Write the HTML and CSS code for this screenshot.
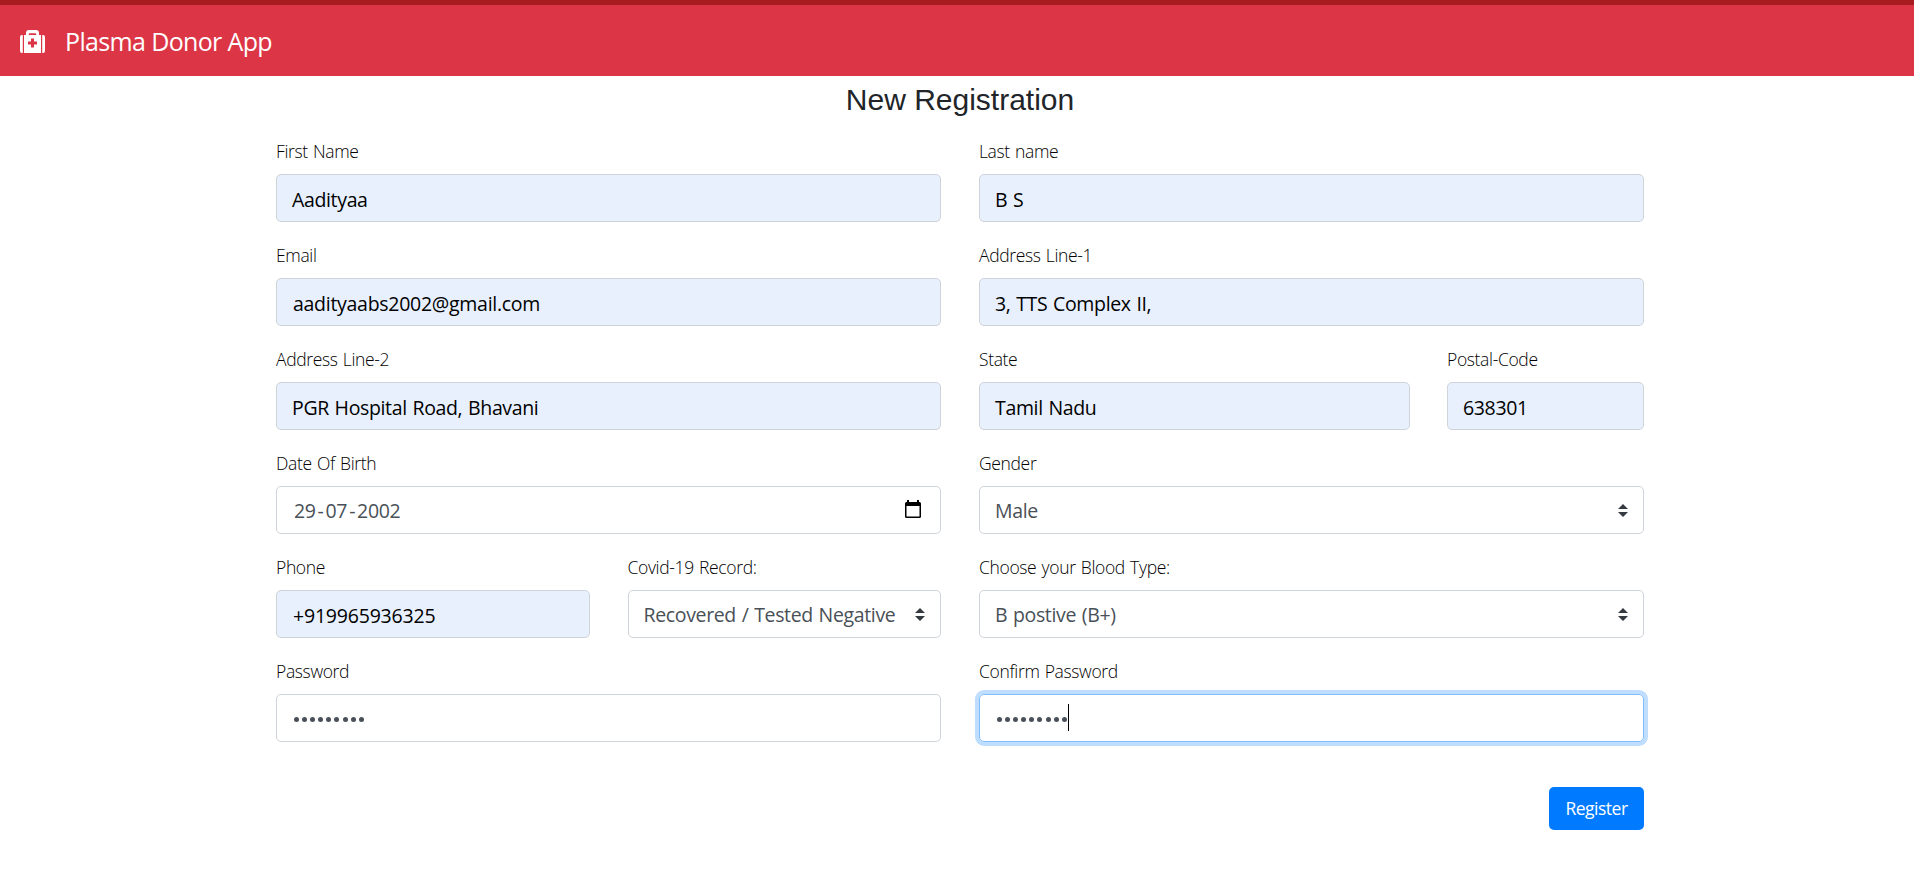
FILE: index.html
```html
<!DOCTYPE html>
<html lang="en">
<head>
<meta charset="utf-8">
<title>Plasma Donor App</title>
<link rel="stylesheet" href="styles.css">
</head>
<body>
<header class="navbar">
  <svg class="brand-icon" viewBox="0 0 25 23"><path fill="#fff" d="M2 5H2.800V23H2Q0 23 0 21V7Q0 5 2 5ZM4 5H6V3Q6 0 9 0H16Q19 0 19 3V5H21V23H4ZM8.800 5H16.200V3.800Q16.200 3.200 15.500 3.200H9.500Q8.800 3.200 8.800 3.800ZM22.200 5H23Q25 5 25 7V21Q25 23 23 23H22.200Z"/><path fill="#dc3545" d="M11 8.500H14V11.500H17V14.500H14V17.500H11V14.500H8V11.500H11Z"/></svg>
  <span class="brand">Plasma Donor App</span>
</header>
<main class="container">
  <h1 class="title">New Registration</h1>
  <div class="grid">
    <div class="field"><label>First Name</label><div class="control filled"><span>Aadityaa</span></div></div>
    <div class="field"><label>Last name</label><div class="control filled"><span>B S</span></div></div>
    <div class="field"><label>Email</label><div class="control filled email"><span>aadityaabs2002@gmail.com</span></div></div>
    <div class="field"><label>Address Line-1</label><div class="control filled"><span>3, TTS Complex II,</span></div></div>
    <div class="field"><label>Address Line-2</label><div class="control filled"><span>PGR Hospital Road, Bhavani</span></div></div>
    <div class="split state-split">
      <div class="field"><label>State</label><div class="control filled"><span>Tamil Nadu</span></div></div>
      <div class="field"><label>Postal-Code</label><div class="control filled"><span>638301</span></div></div>
    </div>
    <div class="field"><label>Date Of Birth</label><div class="control date"><span class="date-text"><span>29</span><span>-</span><span>07</span><span>-</span><span>2002</span></span>
      <svg class="calendar" viewBox="0 0 16 18"><path fill="#000" fill-rule="evenodd" d="M2 0H4V2H12V0H14V2H14.500Q16 2 16 3.500V16.500Q16 18 14.500 18H1.500Q0 18 0 16.500V3.500Q0 2 1.500 2H2ZM1.500 6V16.500H14.500V6Z"/></svg></div></div>
    <div class="field"><label>Gender</label><div class="control select"><span>Male</span><svg class="arrows" viewBox="0 0 10 13"><path d="M0 5L5 0L10 5ZM0 8H10L5 13Z"/></svg></div></div>
    <div class="split">
      <div class="field"><label>Phone</label><div class="control filled phone"><span>+919965936325</span></div></div>
      <div class="field"><label>Covid-19 Record:</label><div class="control select"><span>Recovered / Tested Negative</span><svg class="arrows" viewBox="0 0 10 13"><path d="M0 5L5 0L10 5ZM0 8H10L5 13Z"/></svg></div></div>
    </div>
    <div class="field"><label>Choose your Blood Type:</label><div class="control select"><span>B postive (B+)</span><svg class="arrows" viewBox="0 0 10 13"><path d="M0 5L5 0L10 5ZM0 8H10L5 13Z"/></svg></div></div>
    <div class="field"><label>Password</label><div class="control"><span class="dots"><i></i><i></i><i></i><i></i><i></i><i></i><i></i><i></i><i></i></span></div></div>
    <div class="field"><label>Confirm Password</label><div class="control focused"><span class="dots"><i></i><i></i><i></i><i></i><i></i><i></i><i></i><i></i><i></i></span><b class="caret"></b></div></div>
  </div>
  <div class="actions"><button class="register">Register</button></div>
</main>
</body>
</html>
```
FILE: styles.css
```css
* { box-sizing: border-box; }
body { margin: 0; background: #fff; color: #212529; font-family: "Open Sans", "Noto Sans", sans-serif; }
.navbar { height: 76px; display: flex; align-items: center; padding: 3px 20px 0; background: #dc3545; border-top: 5px solid #a71d1f; }
.brand-icon { width: 25px; height: 23px; margin-right: 20px; margin-top: -1px; }
.brand { color: #fff; font-size: 25px; letter-spacing: -0.65px; line-height: 38px; margin-top: -2px; }
.container { width: 1368px; margin: 0 auto; padding-left: 3px; }
.title { margin: 5px 0 17px; padding-left: 3px; font: 400 30px/38px "Liberation Sans", Arial, sans-serif; text-align: center; }
.grid { display: grid; grid-template-columns: 665px 665px; column-gap: 38px; }
.field { height: 104px; min-width: 0; }
.field label { display: block; height: 38px; color: #000; font-size: 17.5px; font-weight: 350; line-height: 31px; letter-spacing: -0.35px; word-spacing: 1px; white-space: nowrap; }
.control { height: 48px; display: flex; align-items: center; padding: 3px 16px 0 15px; border: 1px solid #ced4da; border-radius: 5px; font-size: 19.5px; letter-spacing: -0.35px; word-spacing: 1px; color: #495057; white-space: nowrap; }
.filled { background: #e8f0fe; color: #000; }
.email { padding-left: 16px; letter-spacing: -0.28px; }
.phone { padding-left: 16px; letter-spacing: -0.2px; }
.split { display: grid; grid-template-columns: 1fr 1fr; column-gap: 38px; }
.state-split { grid-template-columns: 431px 197px; column-gap: 37px; }
.select, .date { justify-content: space-between; padding-right: 15px; padding-top: 1px; }
.date { padding-left: 17px; }
.arrows { width: 10px; height: 13px; fill: #343a40; }
.calendar { width: 16px; height: 18px; margin-right: 4px; margin-top: -3px; }
.date-text { display: flex; gap: 2px; }
.dots { display: flex; gap: 3.1px; padding-left: 2px; }
.dots i { width: 5px; height: 5px; border-radius: 50%; background: #495057; }
.caret { width: 1px; height: 27px; background: #000; margin-left: 1px; margin-top: -5px; }
.focused { border-color: #80bdff; box-shadow: 0 0 0 4px #bfdeff; }
.actions { display: flex; justify-content: flex-end; margin-right: -3px; }
.register { width: 95px; height: 43px; margin-top: 27px; padding-bottom: 3px; border: 0; border-radius: 5px; background: #007bff; color: #fff; font: 400 17.5px "Open Sans", sans-serif; letter-spacing: -0.5px; }
```
